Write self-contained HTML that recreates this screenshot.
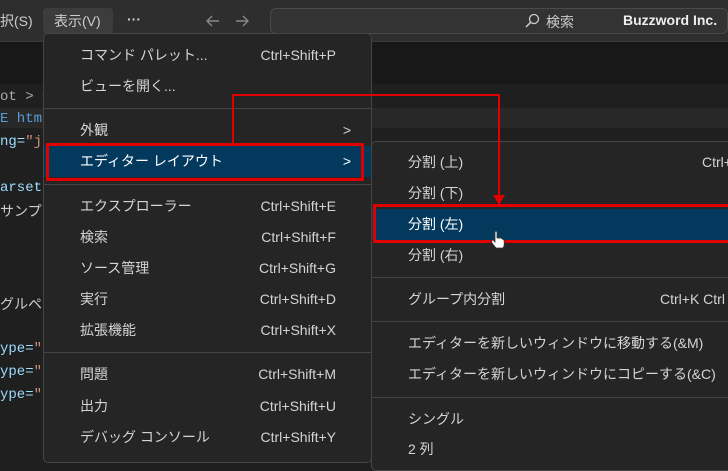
<!DOCTYPE html>
<html><head><meta charset="utf-8"><style>
*{margin:0;padding:0;box-sizing:border-box}
body{width:728px;height:450px;overflow:hidden;background:#1f1f1f;font-family:"Liberation Sans","Noto Sans CJK JP",sans-serif;position:relative;color:#ccc;font-size:14px}
.abs{position:absolute;white-space:nowrap}
.title{left:0;top:0;width:728px;height:42px;background:#2e2e2e;border-bottom:1px solid #3a3a3a}
.tabs{left:0;top:42px;width:728px;height:42px;background:#181818}
.code{font-family:"Liberation Mono","Noto Sans CJK JP",monospace;font-size:14px}
.menu{background:#252526;border:1px solid #454545;border-radius:5px}
.it{position:absolute;left:0;right:0;height:31px;line-height:31px;color:#d4d4d4}
.it .l{position:absolute;left:36px}
.it .r{position:absolute;right:35px}
.sep{position:absolute;left:0;right:0;height:1px;background:#454545}
.hl{background:#04395e;color:#fff}
</style></head><body>
<div class="abs title"></div>
<div class="abs" style="left:0;top:11px;color:#ccc;font-size:14px">択(S)</div>
<div class="abs" style="left:43px;top:8px;width:70px;height:26px;background:#3c3c3c;border-radius:4px"></div>
<div class="abs" style="left:54px;top:11px;color:#ccc">表示(V)</div>
<div class="abs" style="left:127px;top:11px;color:#ccc;font-weight:bold">···</div>
<svg class="abs" style="left:204px;top:12px" width="50" height="18" viewBox="0 0 50 18"><path d="M15 9H3M8 4 3 9l5 5M32 9h12M39 4l5 5-5 5" fill="none" stroke="#888" stroke-width="1.4"/></svg>
<div class="abs" style="left:270px;top:8px;width:458px;height:26px;background:#333;border:1px solid #4a4a4a;border-radius:6px"></div>
<svg class="abs" style="left:524px;top:13px" width="16" height="16" viewBox="0 0 16 16"><circle cx="10" cy="6" r="4.5" fill="none" stroke="#ccc" stroke-width="1.3"/><path d="M6.8 9.2 2 14" stroke="#ccc" stroke-width="1.5"/></svg>
<div class="abs" style="left:546px;top:12px;color:#ccc">検索</div>
<div class="abs" style="left:623px;top:12px;color:#eee;font-weight:bold">Buzzword Inc.</div>
<div class="abs tabs"></div>
<div class="abs" style="left:0;top:84px;width:728px;height:26px;background:#1f1f1f"></div>
<div class="abs" style="left:0;top:108px;width:728px;height:20px;background:#282828"></div>
<div class="abs code" style="left:0;top:89px;color:#aaa">ot <span style="color:#aaa">&gt;</span> <span style="color:#d7844d">&lt;</span></div>
<div class="abs code" style="left:0;top:111px;color:#569cd6">E htm</div>
<div class="abs code" style="left:0;top:134px;color:#9cdcfe">ng=<span style="color:#ce9178">"j</span></div>
<div class="abs code" style="left:0;top:180px;color:#9cdcfe">arset</div>
<div class="abs" style="left:0;top:201px;color:#ccc">サンプ</div>
<div class="abs" style="left:0;top:294px;color:#ccc">グルペ</div>
<div class="abs code" style="left:0;top:341px;color:#9cdcfe">ype=<span style="color:#ce9178">"</span></div>
<div class="abs code" style="left:0;top:364px;color:#9cdcfe">ype=<span style="color:#ce9178">"</span></div>
<div class="abs code" style="left:0;top:387px;color:#9cdcfe">ype=<span style="color:#ce9178">"</span></div>

<div class="abs menu" style="left:43px;top:33px;width:329px;height:430px">
 <div class="it" style="top:6px"><span class="l">コマンド パレット...</span><span class="r">Ctrl+Shift+P</span></div>
 <div class="it" style="top:37px"><span class="l">ビューを開く...</span></div>
 <div class="sep" style="top:74px"></div>
 <div class="it" style="top:81px"><span class="l">外観</span><span class="r" style="right:20px">&gt;</span></div>
 <div class="it hl" style="top:112px"><span class="l">エディター レイアウト</span><span class="r" style="right:20px">&gt;</span></div>
 <div class="sep" style="top:150px"></div>
 <div class="it" style="top:157px"><span class="l">エクスプローラー</span><span class="r">Ctrl+Shift+E</span></div>
 <div class="it" style="top:188px"><span class="l">検索</span><span class="r">Ctrl+Shift+F</span></div>
 <div class="it" style="top:219px"><span class="l">ソース管理</span><span class="r">Ctrl+Shift+G</span></div>
 <div class="it" style="top:250px"><span class="l">実行</span><span class="r">Ctrl+Shift+D</span></div>
 <div class="it" style="top:281px"><span class="l">拡張機能</span><span class="r">Ctrl+Shift+X</span></div>
 <div class="sep" style="top:318px"></div>
 <div class="it" style="top:325px"><span class="l">問題</span><span class="r">Ctrl+Shift+M</span></div>
 <div class="it" style="top:357px"><span class="l">出力</span><span class="r">Ctrl+Shift+U</span></div>
 <div class="it" style="top:388px"><span class="l">デバッグ コンソール</span><span class="r">Ctrl+Shift+Y</span></div>
</div>

<div class="abs menu" style="left:371px;top:141px;width:380px;height:330px">
 <div class="it" style="top:5px"><span class="l">分割 (上)</span><span style="position:absolute;left:330px">Ctrl+</span></div>
 <div class="it" style="top:36px"><span class="l">分割 (下)</span></div>
 <div class="it hl" style="top:67px"><span class="l">分割 (左)</span></div>
 <div class="it" style="top:98px"><span class="l">分割 (右)</span></div>
 <div class="sep" style="top:135px"></div>
 <div class="it" style="top:142px"><span class="l">グループ内分割</span><span style="position:absolute;left:288px">Ctrl+K Ctrl</span></div>
 <div class="sep" style="top:179px"></div>
 <div class="it" style="top:186px"><span class="l">エディターを新しいウィンドウに移動する(&amp;M)</span></div>
 <div class="it" style="top:217px"><span class="l">エディターを新しいウィンドウにコピーする(&amp;C)</span></div>
 <div class="sep" style="top:255px"></div>
 <div class="it" style="top:262px"><span class="l">シングル</span></div>
 <div class="it" style="top:292px"><span class="l">2 列</span></div>
</div>

<div class="abs" style="left:46px;top:143px;width:318px;height:38px;border:3px solid #e00000"></div>
<div class="abs" style="left:373px;top:204px;width:360px;height:39px;border:3px solid #e00000"></div>
<svg class="abs" style="left:0;top:0" width="728" height="450">
<path d="M233 144 V95 H499 V196" fill="none" stroke="#e00000" stroke-width="2"/>
<path d="M493 195 L505 195 L499 205 Z" fill="#e00000"/>
<path d="M495 232 v10 l-2-2 q-2 0-1 3 l4 5 h7 q2-3 1-8 l-3-2 h-4 v-6 q-1-2-2 0z" fill="#fff" stroke="#333" stroke-width="0.8"/>
</svg>
</body></html>
